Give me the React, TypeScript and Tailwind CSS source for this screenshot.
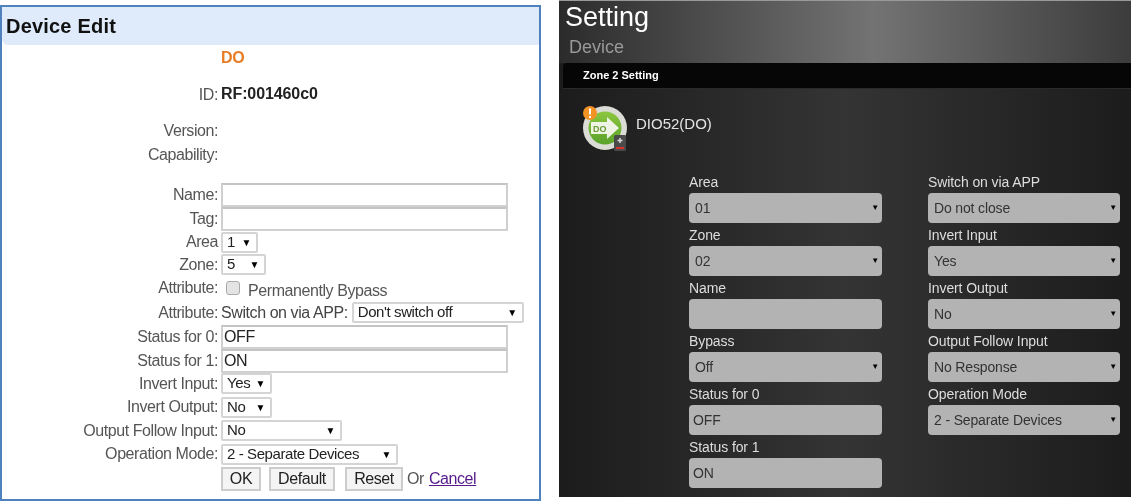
import type { ReactNode } from "react";

const sans = "font-['Liberation_Sans',Arial,sans-serif]";

function Row({ label, h, children }: { label?: string; h: string; children?: ReactNode }) {
  return (
    <div className={`flex items-center ${h}`}>
      <div className="w-[213px] shrink-0 text-right text-[#555]">{label}</div>
      <div className="ml-[3px] flex min-w-0 items-center">{children}</div>
    </div>
  );
}

function TextBox({ value }: { value?: string }) {
  return (
    <div className="h-[24px] w-[287px] shrink-0 border-2 border-[#d0d0d0] border-t-[#c4c4c4] pl-px text-[16px] leading-[20px] text-[#222]">
      {value}
    </div>
  );
}

function Dropdown({ value, w }: { value: string; w: string }) {
  return (
    <div className={`flex h-[21px] shrink-0 items-center justify-between rounded-[2px] border-2 border-[#d4d4d4] pl-[4px] pr-[5px] text-[15px] tracking-[-0.4px] text-[#222] ${w}`}>
      <span>{value}</span>
      <span className="text-[10px] text-black">▼</span>
    </div>
  );
}

function FormButton({ label, w }: { label: string; w: string }) {
  return (
    <div className={`flex h-[24px] items-center justify-center border-2 border-[#ccc] bg-[#f4f4f4] text-[16px] text-[#222] ${w}`}>
      {label}
    </div>
  );
}

function DeviceEdit() {
  return (
    <div className={`mt-[5px] h-[496px] w-[541px] shrink-0 overflow-hidden border-2 border-[#4f81bd] text-[16px] tracking-[-0.42px] ${sans}`}>
      <div className="flex h-[38px] items-center rounded-bl-[6px] bg-[#dfebfb] pl-[4px] text-[20px] font-bold tracking-[0.2px] text-[#111]">
        Device Edit
      </div>
      <div className="pl-[3px]">
        <Row h="h-[26px]">
          <span className="text-[16px] font-bold text-[#e87d25]">DO</span>
        </Row>
        <Row label="ID:" h="h-[48px]">
          <span className="-translate-y-px text-[16px] font-bold tracking-[-0.1px] text-[#222]">RF:001460c0</span>
        </Row>
        <Row label="Version:" h="h-[24px]" />
        <Row label="Capability:" h="h-[24px]" />
        <div className="h-[16px]" />
        <Row label="Name:" h="h-[24px]"><TextBox /></Row>
        <Row label="Tag:" h="h-[24px]"><TextBox /></Row>
        <Row label="Area" h="h-[22px]"><Dropdown value="1" w="w-[37px]" /></Row>
        <Row label="Zone:" h="h-[23px]"><Dropdown value="5" w="w-[45px]" /></Row>
        <Row label="Attribute:" h="h-[24px]">
          <span className="ml-[5px] h-[14px] w-[14px] rounded-[3px] border border-[#aaa] bg-[#e4e4e4]" />
          <span className="ml-[8px] translate-y-[3px] whitespace-nowrap text-[#555]">Permanently Bypass</span>
        </Row>
        <Row label="Attribute:" h="h-[25px]">
          <span className="mr-[4px] whitespace-nowrap text-[#444]">Switch on via APP:</span>
          <Dropdown value="Don't switch off" w="w-[172px]" />
        </Row>
        <Row label="Status for 0:" h="h-[24px]"><TextBox value="OFF" /></Row>
        <Row label="Status for 1:" h="h-[23px]"><TextBox value="ON" /></Row>
        <Row label="Invert Input:" h="h-[23px]"><Dropdown value="Yes" w="w-[51px]" /></Row>
        <Row label="Invert Output:" h="h-[24px]"><Dropdown value="No" w="w-[51px]" /></Row>
        <Row label="Output Follow Input:" h="h-[23px]"><Dropdown value="No" w="w-[121px]" /></Row>
        <Row label="Operation Mode:" h="h-[24px]"><Dropdown value="2 - Separate Devices" w="w-[177px]" /></Row>
        <Row h="h-[26px]">
          <FormButton label="OK" w="w-[40px]" />
          <div className="w-[8px]" />
          <FormButton label="Default" w="w-[66px]" />
          <div className="w-[10px]" />
          <FormButton label="Reset" w="w-[58px]" />
          <span className="ml-[4px] text-[#555]">Or</span>
          <span className="ml-[5px] text-[#551a8b] underline">Cancel</span>
        </Row>
      </div>
    </div>
  );
}

function DeviceIcon() {
  return (
    <svg width="50" height="50" viewBox="0 0 50 50" className="shrink-0">
      <defs>
        <linearGradient id="doGreen" x1="0" y1="0" x2="0" y2="1">
          <stop offset="0" stopColor="#8cc63f" />
          <stop offset="1" stopColor="#5aa32a" />
        </linearGradient>
      </defs>
      <circle cx="25" cy="26" r="22" fill="#dcdcd6" />
      <circle cx="25" cy="26" r="16.5" fill="url(#doGreen)" />
      <path d="M11 20h16v-5l12 11-12 11v-5H11z" fill="#eef3e4" />
      <text x="13" y="29.5" fontSize="9" fontWeight="700" fill="#6a9a35" fontFamily="Liberation Sans">DO</text>
      <circle cx="10" cy="11" r="7" fill="#f39325" />
      <rect x="9" y="6.5" width="2" height="6" fill="#fff" />
      <rect x="9" y="14" width="2" height="2" fill="#fff" />
      <rect x="34" y="33" width="12" height="16" rx="1.5" fill="#4a4a4a" />
      <path d="M40 36v5M37.5 38.5h5" stroke="#ddd" strokeWidth="1.5" />
      <rect x="36" y="45" width="8" height="2" fill="#d9342b" />
    </svg>
  );
}

function Field({ label, value, input }: { label: string; value?: string; input?: boolean }) {
  return (
    <div className="h-[53px]">
      <div className="h-[24px] pt-[3px] text-[14px] leading-[20px] tracking-[-0.1px] text-[#ddd]">{label}</div>
      <div className={`flex h-[30px] items-center justify-between rounded-[4px] bg-[#b3b3b3] text-[14px] tracking-[-0.15px] text-[#333] ${input ? "pl-[4px]" : "pl-[6px] pr-[3px]"}`}>
        <span>{value}</span>
        {!input && <span className="text-[8px] text-black">▼</span>}
      </div>
    </div>
  );
}

function SettingPanel() {
  return (
    <div className={`ml-[18px] h-[497px] w-[572px] shrink-0 overflow-hidden bg-[linear-gradient(90deg,#1c1c1c,#343434_50%,#1c1c1c)] ${sans}`}>
      <div className="h-[63px] border-t border-[#999] bg-[linear-gradient(90deg,#2b2b2b,#737373_55%,#3c3c3c)] pl-[6px]">
        <div className="h-[33px] text-[27px] leading-[33px] text-white">Setting</div>
        <div className="pl-[4px] text-[18px] leading-[26px] text-[#999]">Device</div>
      </div>
      <div className="ml-[4px] flex h-[26px] items-center rounded-tl-[4px] border-b border-[#2a2a2a] bg-[#060606] pl-[20px] text-[11px] font-bold text-white">
        Zone 2 Setting
      </div>
      <div className="flex items-start pl-[21px] pt-[13px]">
        <DeviceIcon />
        <span className="ml-[6px] mt-[11px] text-[15px] text-[#e4e4e4]">DIO52(DO)</span>
      </div>
      <div className="ml-[130px] mt-[17px] grid w-[431px] grid-cols-[193px_192px] gap-x-[46px]">
        <div>
          <Field label="Area" value="01" />
          <Field label="Zone" value="02" />
          <Field label="Name" input />
          <Field label="Bypass" value="Off" />
          <Field label="Status for 0" value="OFF" input />
          <Field label="Status for 1" value="ON" input />
        </div>
        <div>
          <Field label="Switch on via APP" value="Do not close" />
          <Field label="Invert Input" value="Yes" />
          <Field label="Invert Output" value="No" />
          <Field label="Output Follow Input" value="No Response" />
          <Field label="Operation Mode" value="2 - Separate Devices" />
        </div>
      </div>
    </div>
  );
}

export default function App() {
  return (
    <div className="flex h-[502px] w-[1131px] items-start overflow-hidden bg-white blur-[0.4px]">
      <DeviceEdit />
      <SettingPanel />
    </div>
  );
}
